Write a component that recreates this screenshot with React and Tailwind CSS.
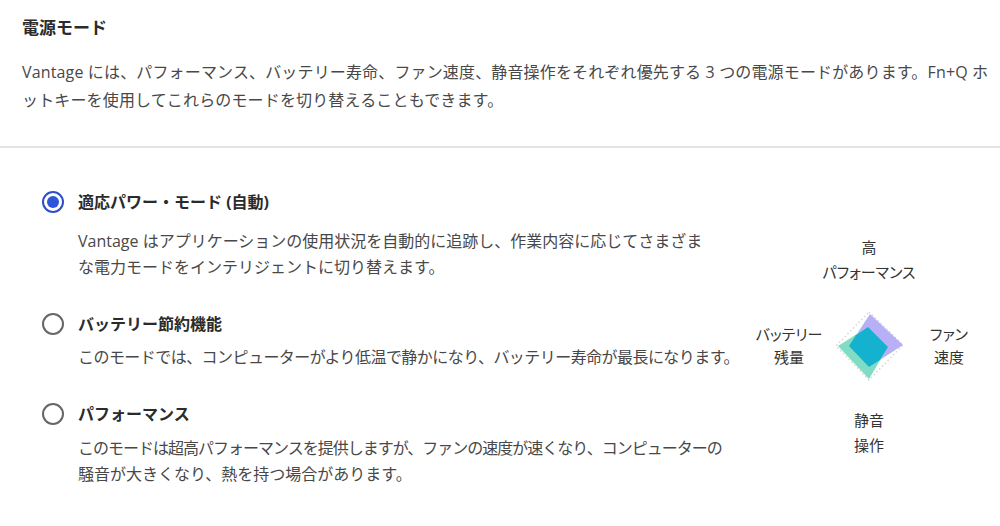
import React, { useState } from "react";

// each line keeps its own tracking so the katakana-heavy lines end where the original wraps
const modes = [
  {
    id: "adaptive",
    label: "適応パワー・モード (自動)",
    lines: [
      { text: "Vantage はアプリケーションの使用状況を自動的に追跡し、作業内容に応じてさまざま", cls: "" },
      { text: "な電力モードをインテリジェントに切り替えます。", cls: "" },
    ],
    gap: "mt-3",
  },
  {
    id: "battery",
    label: "バッテリー節約機能",
    lines: [
      {
        text: "このモードでは、コンピューターがより低温で静かになり、バッテリー寿命が最長になります。",
        cls: "tracking-[-0.55px]",
      },
    ],
    gap: "mt-[6px]",
  },
  {
    id: "performance",
    label: "パフォーマンス",
    lines: [
      {
        text: "このモードは超高パフォーマンスを提供しますが、ファンの速度が速くなり、コンピューターの",
        cls: "tracking-[-1px]",
      },
      { text: "騒音が大きくなり、熱を持つ場合があります。", cls: "" },
    ],
    gap: "mt-[7px]",
  },
];

const Radio = ({ checked }) => (
  <span
    className={
      checked
        ? "flex h-[22px] w-[22px] shrink-0 items-center justify-center rounded-full border-2 border-[#2f4fc4]"
        : "flex h-[22px] w-[22px] shrink-0 items-center justify-center rounded-full border-2 border-[#666666]"
    }
  >
    {checked && <span className="h-[12px] w-[12px] rounded-full bg-[#2d56d8]" />}
  </span>
);

const ModeChart = () => (
  <div className="flex w-[240px] flex-col items-center text-[15px] leading-[25px] text-[#333333] [font-feature-settings:'palt']">
    <div className="text-center">
      高<br />
      パフォーマンス
    </div>
    <div className="mt-[21px] flex w-full items-center">
      <div className="w-[80px] text-center leading-[23px]">
        バッテリー<br />
        残量
      </div>
      <svg width="80" height="80" viewBox="0 0 80 80">
        <polygon
          points="40,6 74,39 40,74 7,40"
          fill="none"
          stroke="#d6d6d6"
          strokeWidth="1.5"
          strokeDasharray="1.5 2.5"
        />
        <polygon points="41,8 74,39 40,61 20,40" fill="#b7b0f6" />
        <polygon points="39,21 59,41 40,73 9,40" fill="#80dcc4" />
        <polygon
          points="39,21 59,41 50.9,54.1 40,61 20,40 26.9,29.3"
          fill="#14b2cf"
        />
      </svg>
      <div className="w-[80px] text-center leading-[23px]">
        ファン<br />
        速度
      </div>
    </div>
    <div className="mt-[22px] text-center">
      静音<br />
      操作
    </div>
  </div>
);

export default function App() {
  const [mode, setMode] = useState("adaptive");

  return (
    <div className="h-[526px] w-[1000px] overflow-hidden bg-white font-['Open_Sans','Noto_Sans_CJK_JP',sans-serif]">
      {/* header */}
      <div className="px-[22px] pt-[14px]">
        <h1 className="text-[17px] font-bold leading-[28px] text-[#2b2b2b]">
          電源モード
        </h1>
        <p className="mt-4 whitespace-nowrap text-[16px] leading-[28px] tracking-[0.15px] text-[#484848]">
          Vantage には、パフォーマンス、バッテリー寿命、ファン速度、静音操作をそれぞれ優先する 3 つの電源モードがあります。Fn+Q ホ
          <br />
          ットキーを使用してこれらのモードを切り替えることもできます。
        </p>
      </div>
      <div className="mt-8 h-[2px] w-full bg-[#e3e3e8]" />

      {/* modes */}
      <div className="mt-10 flex">
        <div className="flex w-[740px] shrink-0 flex-col gap-[30px] pl-[42px]">
          {modes.map((m) => (
            <div key={m.id}>
              <button
                type="button"
                onClick={() => setMode(m.id)}
                className="flex h-[28px] items-center gap-[14px]"
              >
                <Radio checked={mode === m.id} />
                <span className="text-[16px] font-bold text-[#2b2b2b]">
                  {m.label}
                </span>
              </button>
              <div
                className={`${m.gap} ml-[36px] whitespace-nowrap text-[16px] leading-[26px] text-[#484848]`}
              >
                {m.lines.map((line, i) => (
                  <p key={i} className={line.cls}>
                    {line.text}
                  </p>
                ))}
              </div>
            </div>
          ))}
        </div>
        <div className="ml-[9px] mt-[47px]">
          <ModeChart />
        </div>
      </div>
    </div>
  );
}
